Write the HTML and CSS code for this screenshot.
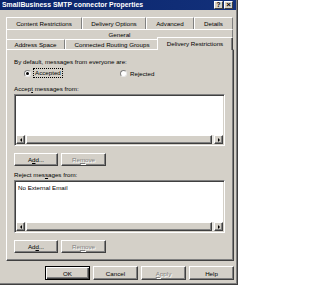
FILE: index.html
```html
<!DOCTYPE html>
<html>
<head>
<meta charset="utf-8">
<link rel="stylesheet" href="styles.css">
</head>
<body>
<div class="window">
  <div class="titlebar">
    <span class="title">SmallBusiness SMTP connector Properties</span>
    <div class="tb-btns">
      <span class="tb-btn">?</span>
      <span class="tb-btn tb-close">×</span>
    </div>
  </div>
  <div class="client">
    <div class="tabs">
      <div class="tabrow row1">
        <div class="tab w-content">Content Restrictions</div>
        <div class="tab w-options">Delivery Options</div>
        <div class="tab w-advanced">Advanced</div>
        <div class="tab w-details">Details</div>
      </div>
      <div class="tabrow row2">
        <div class="tab w-general">General</div>
      </div>
      <div class="tabrow row3">
        <div class="tab w-address">Address Space</div>
        <div class="tab w-routing">Connected Routing Groups</div>
        <div class="tab w-restrict selected">Delivery Restrictions</div>
      </div>
    </div>
    <div class="panel">
      <div class="label first">By default, messages from everyone are:</div>
      <div class="radios">
        <label class="radio r-accept"><span class="dot checked"></span><span class="focus">Accepted</span></label>
        <label class="radio r-reject"><span class="dot"></span><span>Re<u>j</u>ected</span></label>
      </div>
      <div class="label gap-lg">Accep<u>t</u> messages from:</div>
      <div class="listbox lb1">
        <div class="items"></div>
        <div class="hscroll">
          <span class="sbtn"><span class="tri tri-left"></span></span>
          <span class="thumb"></span>
          <span class="sbtn"><span class="tri tri-right"></span></span>
        </div>
      </div>
      <div class="btnrow">
        <span class="btn">A<u>d</u>d...</span>
        <span class="btn disabled">Re<u>m</u>ove</span>
      </div>
      <div class="label gap-md">Reject mes<u>s</u>ages from:</div>
      <div class="listbox lb2">
        <div class="items"><div class="item">No External Email</div></div>
        <div class="hscroll">
          <span class="sbtn"><span class="tri tri-left"></span></span>
          <span class="thumb"></span>
          <span class="sbtn"><span class="tri tri-right"></span></span>
        </div>
      </div>
      <div class="btnrow">
        <span class="btn">Ad<u>d</u>...</span>
        <span class="btn disabled">Re<u>m</u>ove</span>
      </div>
    </div>
    <div class="footer">
      <span class="btn fbtn default">OK</span>
      <span class="btn fbtn">Cancel</span>
      <span class="btn fbtn disabled"><u>A</u>pply</span>
      <span class="btn fbtn">Help</span>
    </div>
  </div>
</div>
</body>
</html>
```

FILE: styles.css
```css
* { box-sizing: border-box; }
html, body { margin: 0; padding: 0; background: #fff; }
body {
  font-family: "Liberation Sans", Arial, sans-serif;
  font-size: 6.2px;
  color: #000;
}
.window {
  width: 238px;
  height: 285px;
  background: #d4d0c8;
  border-right: 1px solid #404040;
  border-bottom: 1px solid #404040;
  box-shadow: inset -1px -1px 0 #808080;
  display: flex;
  flex-direction: column;
}
.titlebar {
  height: 10px;
  margin-right: 1px;
  background: linear-gradient(90deg, #0a246a 0%, #12307a 100%);
  color: #fff;
  display: flex;
  align-items: center;
  justify-content: space-between;
  padding: 0 3px 0 2px;
}
.title {
  font-weight: bold;
  font-size: 6.9px;
  line-height: 10px;
  white-space: nowrap;
}
.tb-btns { display: flex; gap: 1px; }
.tb-btn {
  width: 9px;
  height: 8px;
  background: #d4d0c8;
  border-top: 1px solid #fff;
  border-left: 1px solid #fff;
  border-right: 1px solid #404040;
  border-bottom: 1px solid #404040;
  color: #000;
  font-weight: bold;
  font-size: 6.5px;
  line-height: 6px;
  text-align: center;
}
.tb-close { font-size: 8px; line-height: 6px; }
.client {
  flex: 1;
  padding: 7px 3px 0 6px;
  display: flex;
  flex-direction: column;
}
.tabs { display: flex; flex-direction: column; }
.tabrow { display: flex; height: 10px; }
.row1 { height: 12px; }
.tab {
  border-top: 1px solid #fff;
  border-left: 1px solid #fff;
  border-right: 1px solid #808080;
  text-align: center;
  white-space: nowrap;
  line-height: 10px;
  border-top-left-radius: 1px;
  border-top-right-radius: 1px;
}
.row1 .tab { line-height: 11px; }
.w-content { width: 76px; }
.w-options { width: 64px; }
.w-advanced { width: 48px; }
.w-details { width: 39px; }
.w-general { width: 227px; }
.w-address { width: 59px; }
.w-routing { width: 94px; }
.w-restrict { width: 74px; }
.tab.selected {
  position: relative;
  z-index: 1;
  width: 76px;
  margin-left: -2px;
  margin-top: -2px;
  height: 13px;
  line-height: 12px;
  background: #d4d0c8;
  border-right: 1px solid #404040;
  box-shadow: inset -1px 0 0 #808080;
}
.panel {
  height: 212px;
  border-top: 1px solid #fff;
  border-left: 1px solid #fff;
  border-right: 1px solid #404040;
  border-bottom: 1px solid #404040;
  box-shadow: inset -1px -1px 0 #808080;
  padding: 0 8px 0 7px;
  display: flex;
  flex-direction: column;
}
.label { line-height: 8px; height: 8px; white-space: nowrap; }
.label.first { margin-top: 8px; }
.label.gap-lg { margin-top: 7px; }
.label.gap-md { margin-top: 5px; }
.radios { display: flex; height: 10px; margin-top: 2px; align-items: center; }
.radio { display: flex; align-items: center; gap: 3px; }
.r-accept { margin-left: 10px; width: 96px; }
.dot {
  width: 7px;
  height: 7px;
  border-radius: 50%;
  background: #fff;
  border: 1px solid #808080;
  border-right-color: #e8e8e8;
  border-bottom-color: #e8e8e8;
  display: flex;
  align-items: center;
  justify-content: center;
}
.dot.checked::after {
  content: "";
  width: 3px;
  height: 3px;
  border-radius: 50%;
  background: #000;
}
.focus {
  outline: 1px dotted #000;
  outline-offset: 0;
  line-height: 8px;
  padding: 0 1px;
}
.listbox {
  margin-top: 1px;
  background: #fff;
  border-top: 1px solid #808080;
  border-left: 1px solid #808080;
  border-right: 1px solid #fff;
  border-bottom: 1px solid #fff;
  box-shadow: inset 1px 1px 0 #404040, inset -1px -1px 0 #d4d0c8;
  padding: 1px;
  display: flex;
  flex-direction: column;
}
.lb1 { height: 52px; }
.lb2 { height: 53px; }
.items { flex: 1; padding: 2px 2px; }
.item { line-height: 8px; white-space: nowrap; }
.hscroll {
  height: 9px;
  display: flex;
  gap: 1px;
  background: #e8e6e2;
}
.sbtn, .thumb {
  height: 9px;
  background: #d4d0c8;
  border-top: 1px solid #fff;
  border-left: 1px solid #fff;
  border-right: 1px solid #404040;
  border-bottom: 1px solid #404040;
  box-shadow: inset -1px -1px 0 #808080;
}
.sbtn {
  width: 9px;
  display: flex;
  align-items: center;
  justify-content: center;
}
.thumb { flex: 1; margin-right: 1px; }
.tri { width: 0; height: 0; border-top: 2px solid transparent; border-bottom: 2px solid transparent; }
.tri-left { border-right: 2px solid #000; }
.tri-right { border-left: 2px solid #000; }
.btnrow { display: flex; gap: 3px; margin-top: 7px; }
.btn {
  display: flex;
  align-items: center;
  justify-content: center;
  width: 44px;
  height: 13px;
  background: #d4d0c8;
  border-top: 1px solid #fff;
  border-left: 1px solid #fff;
  border-right: 1px solid #404040;
  border-bottom: 1px solid #404040;
  box-shadow: inset -1px -1px 0 #808080;
  white-space: nowrap;
}
.btnrow .btn + .btn { width: 45px; }
.btn.disabled { color: #808080; text-shadow: 1px 1px 0 #fff; }
.footer {
  display: flex;
  justify-content: flex-end;
  gap: 3px;
  margin-top: 5px;
}
.fbtn { width: 45px; height: 14px; }
.fbtn.default {
  border: 1px solid #000;
  box-shadow: inset 1px 1px 0 #fff, inset -1px -1px 0 #404040, inset -2px -2px 0 #808080;
}
u { text-decoration: underline; text-underline-offset: 1px; }
```
